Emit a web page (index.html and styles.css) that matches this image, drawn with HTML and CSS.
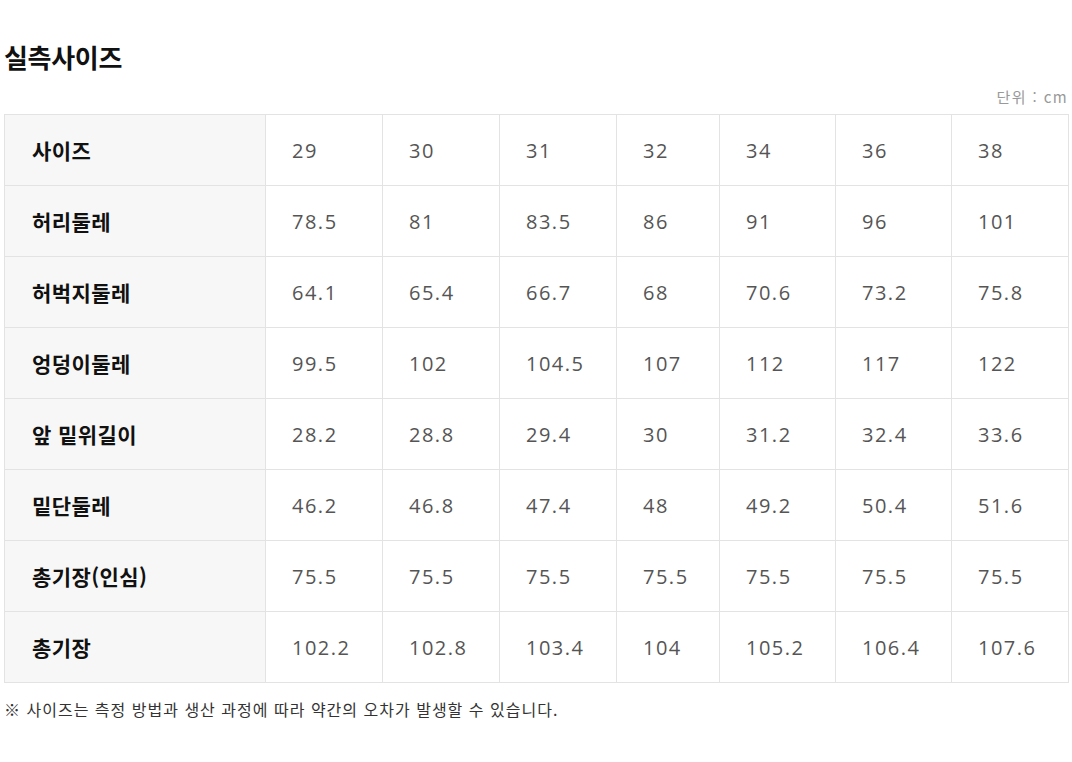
FILE: index.html
```html
<!DOCTYPE html>
<html lang="ko">
<head>
<meta charset="utf-8">
<link rel="stylesheet" href="styles.css">
</head>
<body>
<div class="page">
  <h2 class="title">실측사이즈</h2>
  <div class="unit">단위 : cm</div>
  <table class="size-table">
    <colgroup>
      <col class="c-head">
      <col class="c1"><col class="c2"><col class="c3"><col class="c4"><col class="c5"><col class="c6"><col class="c7">
    </colgroup>
    <tbody>
      <tr><th>사이즈</th><td>29</td><td>30</td><td>31</td><td>32</td><td>34</td><td>36</td><td>38</td></tr>
      <tr><th>허리둘레</th><td>78.5</td><td>81</td><td>83.5</td><td>86</td><td>91</td><td>96</td><td>101</td></tr>
      <tr><th>허벅지둘레</th><td>64.1</td><td>65.4</td><td>66.7</td><td>68</td><td>70.6</td><td>73.2</td><td>75.8</td></tr>
      <tr><th>엉덩이둘레</th><td>99.5</td><td>102</td><td>104.5</td><td>107</td><td>112</td><td>117</td><td>122</td></tr>
      <tr><th>앞 밑위길이</th><td>28.2</td><td>28.8</td><td>29.4</td><td>30</td><td>31.2</td><td>32.4</td><td>33.6</td></tr>
      <tr><th>밑단둘레</th><td>46.2</td><td>46.8</td><td>47.4</td><td>48</td><td>49.2</td><td>50.4</td><td>51.6</td></tr>
      <tr><th>총기장(인심)</th><td>75.5</td><td>75.5</td><td>75.5</td><td>75.5</td><td>75.5</td><td>75.5</td><td>75.5</td></tr>
      <tr><th>총기장</th><td>102.2</td><td>102.8</td><td>103.4</td><td>104</td><td>105.2</td><td>106.4</td><td>107.6</td></tr>
    </tbody>
  </table>
  <p class="note">※ 사이즈는 측정 방법과 생산 과정에 따라 약간의 오차가 발생할 수 있습니다.</p>
</div>
</body>
</html>
```
FILE: styles.css
```css
html, body {
  margin: 0;
  padding: 0;
  background: #fff;
}
body {
  font-family: "Noto Sans CJK KR", "Noto Sans", sans-serif;
  color: #111;
}
.page {
  padding: 39px 4px 0 4px;
}
.title {
  margin: 0;
  font-size: 26px;
  font-weight: 700;
  line-height: 36px;
  color: #111;
  letter-spacing: -0.3px;
}
.unit {
  text-align: right;
  font-size: 15px;
  line-height: 20px;
  color: #999;
  letter-spacing: 1.4px;
  margin-top: 12px;
  margin-bottom: 7px;
}
.size-table {
  width: 1065px;
  border-collapse: collapse;
  table-layout: fixed;
}
.c-head { width: 261px; }
.c1, .c2, .c3 { width: 117px; }
.c4 { width: 103px; }
.c5, .c6 { width: 116px; }
.c7 { width: 117px; }
.size-table th,
.size-table td {
  border: 1px solid #e3e3e3;
  height: 70px;
  padding: 0;
  text-align: left;
  vertical-align: middle;
}
.size-table th {
  background: #f7f7f7;
  padding-left: 27px;
  font-size: 21px;
  font-weight: 700;
  letter-spacing: 0.4px;
  color: #111;
}
.size-table td {
  padding-left: 26px;
  font-family: "Open Sans", "Noto Sans CJK KR", sans-serif;
  font-size: 20px;
  letter-spacing: 1.5px;
  color: #555;
}
.note {
  margin: 15px 0 0 0;
  font-size: 16px;
  line-height: 22px;
  letter-spacing: 1px;
  color: #333;
}
```
